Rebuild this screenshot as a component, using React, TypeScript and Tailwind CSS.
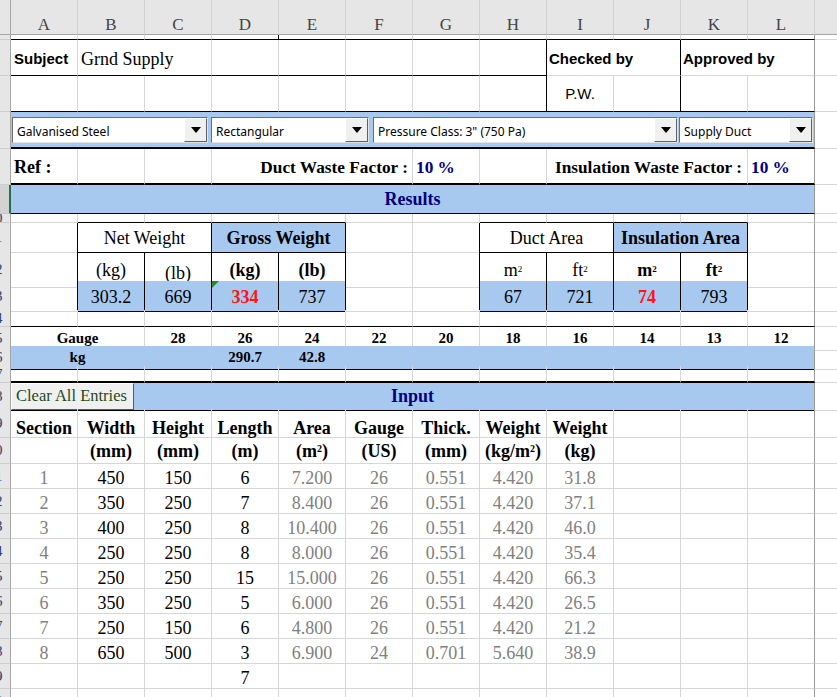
import type { ReactNode } from "react";
import { twMerge } from "tailwind-merge";

const SANS = "[font-family:'Liberation_Sans',Arial,sans-serif]";
const UI = "[font-family:'Noto_Sans','DejaVu_Sans',sans-serif]";
const BLUE = "bg-[#a8c9ef]";
const EDGE = "border-r-[#9a9a9a]";

const spanCls: Record<number, string> = {
  1: "",
  2: "col-span-2",
  3: "col-span-3",
  4: "col-span-4",
  12: "col-span-12",
};

function Cell({
  span = 1,
  className,
  children,
}: {
  span?: number;
  className?: string;
  children?: ReactNode;
}) {
  return (
    <div
      className={twMerge(
        "relative flex min-w-0 items-center justify-center whitespace-nowrap border-r border-b border-r-[#d6d6d6] border-b-[#d6d6d6]",
        spanCls[span],
        className,
      )}
    >
      {children}
    </div>
  );
}

function RowHead({ n, sel }: { n?: number; sel?: boolean }) {
  return (
    <div
      className={
        sel
          ? "flex items-center overflow-hidden border-r-2 border-b border-r-[#217346] border-b-[#c8c8c8] bg-[#d3d3d3]"
          : "flex items-center overflow-hidden border-r border-b border-r-[#a6a6a6] border-b-[#cdcdcd] bg-[#e6e6e6]"
      }
    >
      {n && n >= 10 ? (
        <span className="-ml-[20px] w-[30px] shrink-0 text-center text-[15px] leading-none text-[#34406a]">{n}</span>
      ) : null}
    </div>
  );
}

function Row({ n, h, sel, children }: { n?: number; h: string; sel?: boolean; children: ReactNode }) {
  return (
    <div className={twMerge("grid grid-cols-[11px_repeat(12,67px)_1fr]", h)}>
      <RowHead n={n} sel={sel} />
      {children}
      <div className="border-b border-b-[#d6d6d6]" />
    </div>
  );
}

function Arrow() {
  return (
    <div className="flex h-full w-[23px] shrink-0 items-center justify-center border border-t-white border-l-white border-r-[#606060] border-b-[#606060] bg-[#f0f0f0]">
      <svg width="10" height="6" viewBox="0 0 10 6">
        <path d="M0 0h10L5 6z" fill="#000" />
      </svg>
    </div>
  );
}

function Dropdown({ label, className }: { label: string; className: string }) {
  return (
    <div
      className={twMerge(
        "flex h-[26px] items-center border border-t-[#6e6e6e] border-l-[#6e6e6e] border-r-[#e4e4e4] border-b-[#e4e4e4] bg-white",
        className,
      )}
    >
      <span className={`${UI} flex-1 truncate pl-[4px] pt-[3px] text-[12px] text-black`}>{label}</span>
      <Arrow />
    </div>
  );
}

const cols = ["A", "B", "C", "D", "E", "F", "G", "H", "I", "J", "K", "L"];
const gauges = ["28", "26", "24", "22", "20", "18", "16", "14", "13", "12"];

const data: (string | number)[][] = [
  [1, 450, 150, 6, "7.200", 26, "0.551", "4.420", "31.8"],
  [2, 350, 250, 7, "8.400", 26, "0.551", "4.420", "37.1"],
  [3, 400, 250, 8, "10.400", 26, "0.551", "4.420", "46.0"],
  [4, 250, 250, 8, "8.000", 26, "0.551", "4.420", "35.4"],
  [5, 250, 250, 15, "15.000", 26, "0.551", "4.420", "66.3"],
  [6, 350, 250, 5, "6.000", 26, "0.551", "4.420", "26.5"],
  [7, 250, 150, 6, "4.800", 26, "0.551", "4.420", "21.2"],
  [8, 650, 500, 3, "6.900", 24, "0.701", "5.640", "38.9"],
];
const blackCols = [1, 2, 3];

export default function App() {
  return (
    <div className="h-[697px] w-[837px] overflow-hidden bg-white text-black [font-family:'Liberation_Serif','Times_New_Roman',serif]">
      {/* column letters */}
      <div className="grid h-[35px] grid-cols-[11px_repeat(12,67px)_1fr] bg-[#e6e6e6]">
        <div className="border-r border-b border-r-[#a6a6a6] border-b-[#a6a6a6]" />
        {cols.map((c) => (
          <div
            key={c}
            className="flex items-end justify-center border-r border-b border-r-[#d2d2d2] border-b-[#a6a6a6] pb-[1px] text-[17px] leading-none text-[#444]"
          >
            {c}
          </div>
        ))}
        <div className="border-b border-b-[#a6a6a6]" />
      </div>

      <Row h="h-[5px]">
        {cols.map((c, i) => (
          <Cell
            key={c}
            className={twMerge(
              "border-b-black",
              i === 3 && "border-r-black",
              i === 11 && EDGE,
            )}
          />
        ))}
      </Row>

      {/* subject */}
      <Row h="h-[36px]">
        <Cell className={`${SANS} justify-start border-b-black pl-[3px] pt-[3px] text-[15px] font-bold`}>Subject</Cell>
        <Cell span={2} className="justify-start border-b-black pl-[3px] pt-[3px] text-[18px]">
          Grnd Supply
        </Cell>
        <Cell className="border-b-black" />
        <Cell className="border-b-black" />
        <Cell className="border-b-black" />
        <Cell className="border-b-black" />
        <Cell className="border-b-black border-r-black" />
        <Cell span={2} className={`${SANS} justify-start border-r-black pl-[2px] pt-[3px] text-[15px] font-bold`}>
          Checked by
        </Cell>
        <Cell span={2} className={`${SANS} justify-start pl-[2px] pt-[3px] text-[15px] font-bold ${EDGE}`}>
          Approved by
        </Cell>
      </Row>

      <Row h="h-[36px]">
        {["A", "B", "C", "D", "E", "F", "G"].map((c) => (
          <Cell key={c} className="border-b-black" />
        ))}
        <Cell className="border-b-black border-r-black" />
        <Cell className={`${SANS} border-b-black pt-[2px] text-[15px]`}>P.W.</Cell>
        <Cell className="border-b-black border-r-black" />
        <Cell className="border-b-black" />
        <Cell className={`border-b-black ${EDGE}`} />
      </Row>

      {/* dropdowns */}
      <Row h="h-[37px]">
        <Cell span={12} className={`${BLUE} items-start justify-start border-b-2 border-b-black pt-[5px] ${EDGE}`}>
          <Dropdown label="Galvanised Steel" className="ml-[1px] w-[196px]" />
          <Dropdown label="Rectangular" className="ml-[3px] w-[158px]" />
          <Dropdown label={'Pressure Class: 3" (750 Pa)'} className="ml-[4px] w-[305px]" />
          <Dropdown label="Supply Duct" className="ml-[1px] w-[134px]" />
        </Cell>
      </Row>

      {/* waste factors */}
      <Row h="h-[36px]">
        <Cell className="justify-start border-b-2 border-b-black pl-[3px] pt-[3px] text-[18px] font-bold">Ref :</Cell>
        <Cell className="border-b-2 border-b-black" />
        <Cell className="border-b-2 border-b-black" />
        <Cell span={3} className="justify-end border-b-2 border-b-black pr-[4px] pt-[3px] text-[17.3px] font-bold">
          Duct Waste Factor :
        </Cell>
        <Cell className="justify-start border-b-2 border-b-black pl-[3px] pt-[3px] text-[17.3px] font-bold text-[#000080]">
          10 %
        </Cell>
        <Cell className="border-b-2 border-b-black" />
        <Cell span={3} className="justify-end border-b-2 border-b-black pr-[5px] pt-[3px] text-[17.3px] font-bold">
          Insulation Waste Factor :
        </Cell>
        <Cell
          className={`justify-start border-b-2 border-b-black pl-[3px] pt-[3px] text-[17.3px] font-bold text-[#000080] ${EDGE}`}
        >
          10 %
        </Cell>
      </Row>

      <Row h="h-[29px]" sel>
        <Cell span={12} className={`${BLUE} border-b-black text-[18px] font-bold text-[#000080] ${EDGE}`}>
          Results
        </Cell>
      </Row>

      {/* results tables */}
      <Row n={10} h="h-[9px]">
        <Cell />
        <Cell className="border-b-black" />
        <Cell className="border-b-black" />
        <Cell className="border-b-black" />
        <Cell className="border-b-black" />
        <Cell />
        <Cell />
        <Cell className="border-b-black" />
        <Cell className="border-b-black" />
        <Cell className="border-b-black" />
        <Cell className="border-b-black" />
        <Cell className={EDGE} />
      </Row>

      <Row n={11} h="h-[29px]">
        <Cell className="border-r-black" />
        <Cell span={2} className="border-r-black border-b-black pt-[2px] text-[18px]">
          Net Weight
        </Cell>
        <Cell span={2} className={`${BLUE} border-r-black border-b-black pt-[2px] text-[18px] font-bold`}>
          Gross Weight
        </Cell>
        <Cell />
        <Cell className="border-r-black" />
        <Cell span={2} className="border-r-black border-b-black pt-[2px] text-[18px]">
          Duct Area
        </Cell>
        <Cell span={2} className={`${BLUE} border-r-black border-b-black pt-[2px] text-[18px] font-bold`}>
          Insulation Area
        </Cell>
        <Cell className={EDGE} />
      </Row>

      <Row n={12} h="h-[29px]">
        <Cell className="border-r-black" />
        <Cell className="border-r-black border-b-black pt-[2px] text-[18px]">(kg)</Cell>
        <Cell className="border-r-black border-b-black pt-[8px] text-[18px]">(lb)</Cell>
        <Cell className="border-r-black border-b-black pt-[2px] text-[18px] font-bold">(kg)</Cell>
        <Cell className="border-r-black border-b-black pt-[2px] text-[18px] font-bold">(lb)</Cell>
        <Cell />
        <Cell className="border-r-black" />
        <Cell className="border-r-black border-b-black pt-[2px] text-[18px]">
          <span>
            m<sup className="text-[9px]">2</sup>
          </span>
        </Cell>
        <Cell className="border-r-black border-b-black pt-[2px] text-[18px]">
          <span>
            ft<sup className="text-[9px]">2</sup>
          </span>
        </Cell>
        <Cell className="border-r-black border-b-black pt-[2px] text-[18px] font-bold">
          <span>
            m<sup className="text-[9px]">2</sup>
          </span>
        </Cell>
        <Cell className="border-r-black border-b-black pt-[2px] text-[18px] font-bold">
          <span>
            ft<sup className="text-[9px]">2</sup>
          </span>
        </Cell>
        <Cell className={EDGE} />
      </Row>

      <Row n={13} h="h-[29px]">
        <Cell className="border-r-black" />
        <Cell className={`${BLUE} border-r-black border-b-black pt-[3px] text-[18px]`}>303.2</Cell>
        <Cell className={`${BLUE} border-r-black border-b-black pt-[3px] text-[18px]`}>669</Cell>
        <Cell className={`${BLUE} border-r-black border-b-black pt-[3px] text-[18px] font-bold text-[#ff1414]`}>
          <svg className="absolute left-0 top-0" width="7" height="7" viewBox="0 0 7 7">
            <path d="M0 0h7L0 7z" fill="#1f8a2e" />
          </svg>
          334
        </Cell>
        <Cell className={`${BLUE} border-r-black border-b-black pt-[3px] text-[18px]`}>737</Cell>
        <Cell />
        <Cell className="border-r-black" />
        <Cell className={`${BLUE} border-r-black border-b-black pt-[3px] text-[18px]`}>67</Cell>
        <Cell className={`${BLUE} border-r-black border-b-black pt-[3px] text-[18px]`}>721</Cell>
        <Cell className={`${BLUE} border-r-black border-b-black pt-[3px] text-[18px] font-bold text-[#ff1414]`}>74</Cell>
        <Cell className={`${BLUE} border-r-black border-b-black pt-[3px] text-[18px]`}>793</Cell>
        <Cell className={EDGE} />
      </Row>

      {/* gauge table */}
      <Row n={14} h="h-[17px]">
        {cols.map((c, i) => (
          <Cell key={c} className={twMerge("border-b-black", i === 11 && EDGE)} />
        ))}
      </Row>

      <Row n={15} h="h-[19px]">
        <Cell span={2} className="border-b-black text-[15px] font-bold [border-bottom-style:dotted]">
          Gauge
        </Cell>
        {gauges.map((g, i) => (
          <Cell
            key={g}
            className={twMerge(
              "border-b-black text-[15px] font-bold [border-bottom-style:dotted]",
              i === gauges.length - 1 && EDGE,
            )}
          >
            {g}
          </Cell>
        ))}
      </Row>

      <Row n={16} h="h-[20px]">
        <Cell span={2} className={`${BLUE} border-r-transparent border-b-black text-[15px] font-bold`}>
          kg
        </Cell>
        <Cell className={`${BLUE} border-r-transparent border-b-black`} />
        <Cell className={`${BLUE} border-r-transparent border-b-black text-[15px] font-bold`}>290.7</Cell>
        <Cell className={`${BLUE} border-r-transparent border-b-black text-[15px] font-bold`}>42.8</Cell>
        {["F", "G", "H", "I", "J", "K"].map((c) => (
          <Cell key={c} className={`${BLUE} border-r-transparent border-b-black`} />
        ))}
        <Cell className={`${BLUE} border-b-black ${EDGE}`} />
      </Row>

      <Row n={17} h="h-[17px]">
        {cols.map((c, i) => (
          <Cell key={c} className={twMerge("border-b-2 border-b-black", i === 11 && EDGE)} />
        ))}
      </Row>

      {/* input */}
      <Row n={18} h="h-[26px]">
        <Cell span={12} className={`${BLUE} border-b-black text-[18px] font-bold text-[#000080] ${EDGE}`}>
          Input
          <button className="absolute left-0 top-0 flex h-full w-[123px] items-center border border-t-white border-l-white border-r-[#5a5a5a] border-b-[#5a5a5a] bg-[#f0f0f0] pl-[4px] text-[16.5px] font-normal leading-none text-[#1d4a1d]">
            Clear All Entries
          </button>
        </Cell>
      </Row>

      <Row n={19} h="h-[29px]">
        {["Section", "Width", "Height", "Length", "Area", "Gauge", "Thick.", "Weight", "Weight", "", "", ""].map(
          (t, i) => (
            <Cell key={i} className={twMerge("items-end text-[18px] font-bold leading-none", i === 11 && EDGE)}>
              {t}
            </Cell>
          ),
        )}
      </Row>

      <Row n={20} h="h-[26px]">
        <Cell />
        <Cell className="items-end pb-[3px] text-[18px] font-bold leading-none">(mm)</Cell>
        <Cell className="items-end pb-[3px] text-[18px] font-bold leading-none">(mm)</Cell>
        <Cell className="items-end pb-[3px] text-[18px] font-bold leading-none">(m)</Cell>
        <Cell className="items-end pb-[3px] text-[18px] font-bold leading-none">
          <span>
            (m<sup className="text-[10px]">2</sup>)
          </span>
        </Cell>
        <Cell className="items-end pb-[3px] text-[18px] font-bold leading-none">(US)</Cell>
        <Cell className="items-end pb-[3px] text-[18px] font-bold leading-none">(mm)</Cell>
        <Cell className="items-end pb-[3px] text-[18px] font-bold leading-none">
          <span>
            (kg/m<sup className="text-[10px]">2</sup>)
          </span>
        </Cell>
        <Cell className="items-end pb-[3px] text-[18px] font-bold leading-none">(kg)</Cell>
        <Cell />
        <Cell />
        <Cell className={EDGE} />
      </Row>

      {data.map((r, ri) => (
        <Row key={ri} n={21 + ri} h="h-[25px]">
          {r.map((v, i) => (
            <Cell
              key={i}
              className={twMerge(
                "items-end pb-[1px] text-[18px] leading-none",
                blackCols.includes(i) ? "text-black" : "text-[#808080]",
              )}
            >
              {v}
            </Cell>
          ))}
          <Cell />
          <Cell />
          <Cell className={EDGE} />
        </Row>
      ))}

      <Row n={29} h="h-[25px]">
        <Cell />
        <Cell />
        <Cell />
        <Cell className="items-end pb-[1px] text-[18px] leading-none">7</Cell>
        {["E", "F", "G", "H", "I", "J", "K"].map((c) => (
          <Cell key={c} />
        ))}
        <Cell className={EDGE} />
      </Row>

      <Row n={30} h="h-[25px]">
        {cols.map((c, i) => (
          <Cell key={c} className={twMerge(i === 11 && EDGE)} />
        ))}
      </Row>
    </div>
  );
}
